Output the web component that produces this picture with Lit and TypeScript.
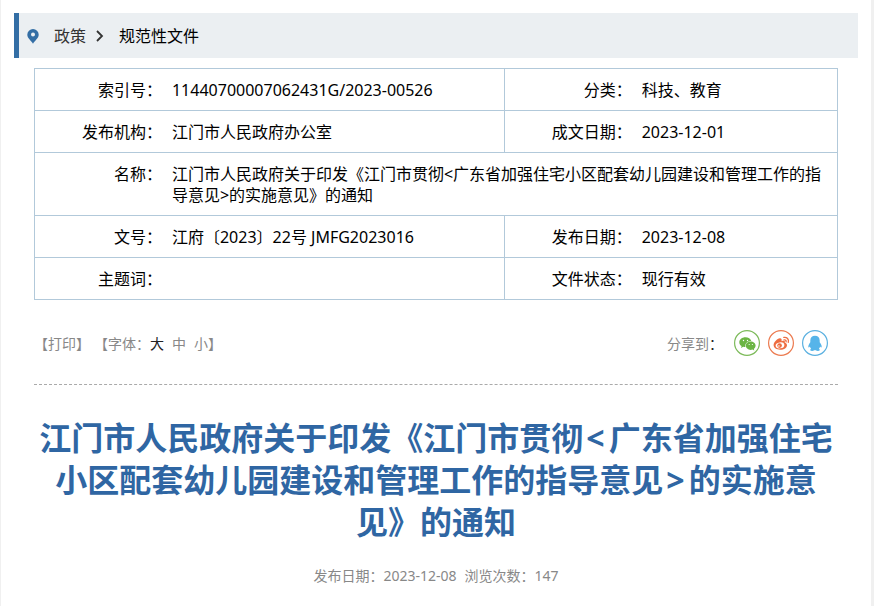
import { LitElement, html, css, svg } from "lit";
import { customElement } from "lit/decorators.js";

const pin = svg`<path fill="#336ea5" fill-rule="evenodd" d="M6 0A5.700 5.700 0 0 0 .3 5.700C.3 9.200 4.200 11.400 6 14.800C7.800 11.400 11.700 9.200 11.700 5.700A5.700 5.700 0 0 0 6 0zM6 3.600a2 2 0 1 1 0 4a2 2 0 0 1 0-4z"/>`;

@customElement("app-root")
export class AppRoot extends LitElement {
  static styles = css`
    :host {
      display: block;
      box-sizing: border-box;
      min-height: 100vh;
      padding: 13px 13px 0;
      border-left: 1px solid #f0f0f0;
      border-right: 3px solid #f0f0f0;
      background: #fff;
      color: #000;
      font: 16px/21px "Noto Sans", "Noto Sans CJK SC", sans-serif;
    }
    a {
      color: inherit;
      text-decoration: none;
    }
    button {
      padding: 0;
      border: 0;
      background: none;
      color: inherit;
      font: inherit;
      cursor: pointer;
    }
    svg {
      display: block;
    }
    .crumbs {
      display: flex;
      align-items: center;
      box-sizing: border-box;
      height: 45px;
      padding: 1px 0 0 8px;
      border-left: 5px solid #336ea5;
      background: #ebeff2;
    }
    .crumbs .section {
      margin: 0 10px 0 15px;
      color: #333;
    }
    .crumbs .current {
      margin-left: 15px;
    }
    main {
      padding: 10px 20px 0;
    }
    table {
      width: 100%;
      border-collapse: collapse;
      table-layout: fixed;
    }
    tr {
      border: 1px solid #b2c9da;
    }
    th,
    td {
      padding: 11px 1px 9px;
      font-weight: normal;
      text-align: left;
      vertical-align: top;
    }
    th {
      text-align: right;
    }
    td {
      padding-left: 9px;
      padding-right: 10px;
    }
    td + th {
      border-left: 1px solid #b2c9da;
    }
    .label-col {
      width: 16%;
    }
    .wide-col {
      width: 42.5%;
    }
    .tools {
      display: flex;
      justify-content: space-between;
      align-items: center;
      box-sizing: border-box;
      height: 85px;
      padding: 2px 10px 0 0;
      border-bottom: 1px dashed #aaa;
      color: #888;
      font-size: 14px;
    }
    .left,
    .share {
      display: flex;
      align-items: center;
    }
    .left {
      gap: 4px;
    }
    .sizes {
      display: inline-flex;
      gap: 8px;
    }
    .active,
    .colon {
      color: #222;
    }
    .share {
      gap: 8px;
    }
    .share-label {
      margin-right: 3px;
    }
    h1 {
      margin: 32px 0 22px;
      color: #2f66a3;
      font-size: 32px;
      line-height: 42px;
      text-align: center;
    }
    .angle {
      display: inline-block;
      padding: 0 4px 0 3px;
    }
    .meta {
      display: flex;
      justify-content: center;
      gap: 8px;
      margin: 0;
      color: #888;
      font-size: 14px;
    }
  `;

  render() {
    return html`
      <nav class="crumbs" lang="zh-CN">
        <svg width="12" height="15" viewBox="0 0 12 15">${pin}</svg>
        <a class="section" href="#">政策</a>
        <svg width="8" height="12" viewBox="0 0 8 12"><path d="M1 1l5 5-5 5" fill="none" stroke="#333" stroke-width="1.800"/></svg>
        <a class="current" href="#">规范性文件</a>
      </nav>
      <main lang="zh-CN">
        <table>
          <colgroup>
            <col class="label-col" /><col class="wide-col" /><col class="label-col" /><col />
          </colgroup>
          <tbody>
            <tr><th scope="row">索引号：</th><td>11440700007062431G/2023-00526</td><th scope="row">分类：</th><td>科技、教育</td></tr>
            <tr><th scope="row">发布机构：</th><td>江门市人民政府办公室</td><th scope="row">成文日期：</th><td>2023-12-01</td></tr>
            <tr><th scope="row">名称：</th><td colspan="3">江门市人民政府关于印发《江门市贯彻&lt;广东省加强住宅小区配套幼儿园建设和管理工作的指导意见&gt;的实施意见》的通知</td></tr>
            <tr><th scope="row">文号：</th><td>江府〔2023〕22号 JMFG2023016</td><th scope="row">发布日期：</th><td>2023-12-08</td></tr>
            <tr><th scope="row">主题词：</th><td></td><th scope="row">文件状态：</th><td>现行有效</td></tr>
          </tbody>
        </table>
        <div class="tools">
          <div class="left">
            <button type="button">【打印】</button>
            <div>【字体：<span class="sizes"><button type="button" class="active">大</button><button type="button">中</button><button type="button">小</button></span>】</div>
          </div>
          <div class="share">
            <span class="share-label">分享到<span class="colon">：</span></span>
            <a href="#" aria-label="微信">
              <svg width="26" height="26" viewBox="0 0 26 26">
                <circle cx="13" cy="13" r="12.400" fill="#fff" stroke="#7cba59" stroke-width="1.200"/>
                <path fill="#6cb544" d="M11.500 7.200c-3.500 0-6.200 2.200-6.200 5c0 1.600.9 3 2.300 3.900l-.6 1.900l2.200-1.200q1.100.3 2.200.3c-.7-3.600 2.100-6 5.900-6c-.6-2.300-3-3.900-5.800-3.900z"/>
                <path fill="#6cb544" d="M16.700 11.400c-2.700 0-4.900 1.900-4.900 4.200c0 2.400 2.200 4.300 4.900 4.300q.9 0 1.700-.3l1.900 1l-.5-1.600c1.100-.8 1.800-2 1.800-3.400c0-2.300-2.200-4.200-4.900-4.200z"/>
                <g fill="#fff"><circle cx="9.500" cy="10.500" r=".7"/><circle cx="13.500" cy="10.500" r=".7"/><circle cx="15.200" cy="14.500" r=".6"/><circle cx="18.400" cy="14.500" r=".6"/></g>
              </svg>
            </a>
            <a href="#" aria-label="微博">
              <svg width="26" height="26" viewBox="0 0 26 26">
                <circle cx="13" cy="13" r="12.400" fill="#fff" stroke="#ec7a4f" stroke-width="1.200"/>
                <path fill="#ee6d41" d="M11.800 8.300c-2.500.3-6.200 3.800-6.200 6.800c0 2.900 3 4.700 6.500 4.700c4.100 0 6.900-2.300 6.900-4.600c0-1.500-1.100-2.200-2.200-2.500c.5-1.600-.3-2.600-3.300-1.500c.6-2-.3-3.100-1.700-2.900z"/>
                <ellipse cx="12" cy="15.400" rx="4.400" ry="3" fill="#fff" transform="rotate(-8 12 15.400)"/>
                <circle cx="11.600" cy="15.600" r="2.300" fill="#ee6d41"/><circle cx="10.900" cy="16" r=".8" fill="#fff"/>
                <path fill="none" stroke="#ee6d41" stroke-width="1.300" stroke-linecap="round" d="M15.800 7.400c3.100-.6 5.400 2 4.500 5M16 9.900c1.500-.3 2.400.7 2.100 1.900"/>
              </svg>
            </a>
            <a href="#" aria-label="QQ">
              <svg width="26" height="26" viewBox="0 0 26 26">
                <circle cx="13" cy="13" r="12.400" fill="#fff" stroke="#5ab0e0" stroke-width="1.200"/>
                <path fill="#56b4e9" d="M13 5.800c-2.900 0-4.700 2-4.700 4.700v1.700c-1 1.300-2 2.900-2 4.600c0 1 .7 1.200 1.600-.2c.2.800.6 1.500 1.200 2.100c-1.600.9-1 2.200 1.100 2.200c1.300 0 2.300-.3 2.800-.8c.5.500 1.500.8 2.800.8c2.100 0 2.700-1.300 1.100-2.200c.6-.6 1-1.300 1.200-2.100c.9 1.400 1.600 1.200 1.600.2c0-1.700-1-3.300-2-4.600v-1.700c0-2.700-1.800-4.700-4.700-4.700z"/>
              </svg>
            </a>
          </div>
        </div>
        <h1>江门市人民政府关于印发《江门市贯彻<span class="angle">&lt;</span>广东省加强住宅小区配套幼儿园建设和管理工作的指导意见<span class="angle">&gt;</span>的实施意见》的通知</h1>
        <p class="meta"><span>发布日期：2023-12-08</span><span>浏览次数：147</span></p>
      </main>
    `;
  }
}
